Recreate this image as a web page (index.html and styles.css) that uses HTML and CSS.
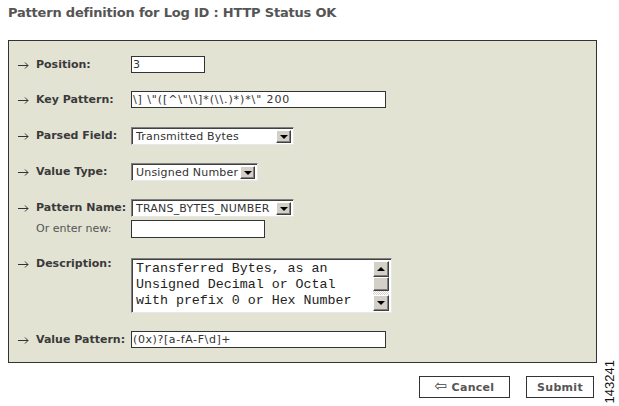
FILE: index.html
```html
<!DOCTYPE html>
<html>
<head>
<meta charset="utf-8">
<link rel="stylesheet" href="styles.css">
</head>
<body>
<h1 class="title">Pattern definition for Log ID : HTTP Status OK</h1>
<div class="panel">
  <div class="row r-pos">
    <div class="label"><span class="arrow"><svg width="11" height="7" viewBox="0 0 11 7"><path d="M0 3.5H10M7 0.5L10 3.5L7 6.5" fill="none" stroke="#333" stroke-width="1"/></svg></span>Position:</div>
    <div class="input w-pos">3</div>
  </div>
  <div class="row r-key">
    <div class="label"><span class="arrow"><svg width="11" height="7" viewBox="0 0 11 7"><path d="M0 3.5H10M7 0.5L10 3.5L7 6.5" fill="none" stroke="#333" stroke-width="1"/></svg></span>Key Pattern:</div>
    <div class="input w-key kp">\] \"([^\"\\]*(\\.)*)*\" 200</div>
  </div>
  <div class="row r-field">
    <div class="label"><span class="arrow"><svg width="11" height="7" viewBox="0 0 11 7"><path d="M0 3.5H10M7 0.5L10 3.5L7 6.5" fill="none" stroke="#333" stroke-width="1"/></svg></span>Parsed Field:</div>
    <div class="select w-field"><span class="sel-text">Transmitted Bytes</span><span class="sel-btn"><span class="tri"></span></span></div>
  </div>
  <div class="row r-type">
    <div class="label"><span class="arrow"><svg width="11" height="7" viewBox="0 0 11 7"><path d="M0 3.5H10M7 0.5L10 3.5L7 6.5" fill="none" stroke="#333" stroke-width="1"/></svg></span>Value Type:</div>
    <div class="select w-type"><span class="sel-text">Unsigned Number</span><span class="sel-btn"><span class="tri"></span></span></div>
  </div>
  <div class="group r-name">
    <div class="row">
      <div class="label"><span class="arrow"><svg width="11" height="7" viewBox="0 0 11 7"><path d="M0 3.5H10M7 0.5L10 3.5L7 6.5" fill="none" stroke="#333" stroke-width="1"/></svg></span>Pattern Name:</div>
      <div class="select w-field"><span class="sel-text">TRANS_BYTES_NUMBER</span><span class="sel-btn"><span class="tri"></span></span></div>
    </div>
    <div class="row sub">
      <div class="label plain"><span class="arrow"></span>Or enter new:</div>
      <div class="input w-new"></div>
    </div>
  </div>
  <div class="row top r-desc">
    <div class="label"><span class="arrow"><svg width="11" height="7" viewBox="0 0 11 7"><path d="M0 3.5H10M7 0.5L10 3.5L7 6.5" fill="none" stroke="#333" stroke-width="1"/></svg></span>Description:</div>
    <div class="textarea">
      <div class="ta-text">Transferred Bytes, as an<br>Unsigned Decimal or Octal<br>with prefix 0 or Hex Number</div>
      <div class="scroll">
        <span class="sb-btn"><span class="tri up"></span></span>
        <span class="sb-thumb"></span>
        <span class="sb-track"></span>
        <span class="sb-btn"><span class="tri"></span></span>
      </div>
    </div>
  </div>
  <div class="row r-val">
    <div class="label"><span class="arrow"><svg width="11" height="7" viewBox="0 0 11 7"><path d="M0 3.5H10M7 0.5L10 3.5L7 6.5" fill="none" stroke="#333" stroke-width="1"/></svg></span>Value Pattern:</div>
    <div class="input w-key">(0x)?[a-fA-F\d]+</div>
  </div>
</div>
<div class="actions">
  <button class="btn cancel"><span class="bk">⇦</span> Cancel</button>
  <button class="btn submit">Submit</button>
</div>
<div class="figno">143241</div>
</body>
</html>
```
FILE: styles.css
```css
html, body {
  margin: 0;
  padding: 0;
  background: #ffffff;
}
body {
  width: 619px;
  height: 406px;
  position: relative;
  overflow: hidden;
  font-family: "DejaVu Sans", Verdana, sans-serif;
  font-size: 11px;
  color: #333;
}
.title {
  margin: 0;
  padding: 5px 0 0 8px;
  font-size: 13px;
  line-height: 16px;
  font-weight: bold;
  color: #555;
  letter-spacing: -0.2px;
}
.panel {
  box-sizing: border-box;
  margin: 19px 0 0 8px;
  width: 589px;
  height: 323px;
  background: #e3e3d4;
  border: 1px solid #333;
  padding: 15px 0 0 9px;
  display: flex;
  flex-direction: column;
}
.row {
  display: flex;
  align-items: center;
}
.row.top {
  align-items: flex-start;
}
.label {
  width: 113px;
  display: flex;
  align-items: center;
  font-weight: bold;
  color: #3a3a3a;
  white-space: nowrap;
  line-height: 14px;
}
.label.plain {
  font-weight: normal;
  color: #555;
}
.arrow {
  width: 18px;
  height: 14px;
  display: flex;
  align-items: center;
  flex: none;
}
.arrow svg {
  display: block;
  margin-top: 1px;
}
.r-pos { margin-bottom: 18px; }
.r-key { margin-bottom: 19px; }
.r-field { margin-bottom: 18px; }
.r-type { margin-bottom: 18px; }
.r-name { margin-bottom: 20px; }
.r-desc { margin-bottom: 18px; }
.sub { margin-top: 3px; }
.r-desc .label { margin-top: -1px; }

.input {
  box-sizing: border-box;
  height: 17px;
  background: #fff;
  border: 1px solid #333;
  padding: 0 2px 0 1px;
  line-height: 15px;
  font-size: 11px;
  color: #333;
  white-space: nowrap;
  overflow: hidden;
  letter-spacing: 0.6px;
}
.input.kp { letter-spacing: 0.9px; }
.w-pos { width: 74px; }
.w-key { width: 255px; }
.w-new { width: 134px; height: 18px; }

.select {
  box-sizing: border-box;
  height: 18px;
  background: #fff;
  border: 1px solid;
  border-color: #808080 #e8e8e8 #e8e8e8 #808080;
  box-shadow: inset 1px 1px 0 #404040;
  display: flex;
  align-items: stretch;
  padding: 2px 2px 1px 4px;
  font-size: 11px;
  color: #333;
}
.w-field { width: 163px; }
.w-type { width: 127px; }
.sel-text {
  flex: 1;
  line-height: 13px;
  white-space: nowrap;
  overflow: hidden;
  letter-spacing: 0.2px;
}
.sel-btn {
  box-sizing: border-box;
  width: 15px;
  background: #d4d0c8;
  border: 1px solid;
  border-color: #fff #404040 #404040 #fff;
  box-shadow: inset -1px -1px 0 #808080;
  display: flex;
  align-items: center;
  justify-content: center;
}
.tri {
  width: 0;
  height: 0;
  border-left: 4px solid transparent;
  border-right: 4px solid transparent;
  border-top: 4px solid #000;
}
.tri.up {
  border-top: 0;
  border-bottom: 4px solid #000;
}

.textarea {
  box-sizing: border-box;
  width: 261px;
  height: 55px;
  background: #fff;
  border: 1px solid;
  border-color: #808080 #e8e8e8 #e8e8e8 #808080;
  box-shadow: inset 1px 1px 0 #404040;
  display: flex;
  padding: 2px 2px 1px 2px;
}
.ta-text {
  flex: 1;
  font-family: "Liberation Mono", "Courier New", monospace;
  font-size: 13.3px;
  line-height: 16px;
  color: #222;
  padding-left: 2px;
  white-space: nowrap;
  overflow: hidden;
}
.scroll {
  width: 16px;
  display: flex;
  flex-direction: column;
}
.sb-btn, .sb-thumb {
  box-sizing: border-box;
  background: #d4d0c8;
  border: 1px solid;
  border-color: #fff #404040 #404040 #fff;
  box-shadow: inset -1px -1px 0 #808080;
  display: flex;
  align-items: center;
  justify-content: center;
}
.sb-btn { height: 16px; }
.sb-thumb { height: 14px; }
.sb-track {
  flex: 1;
  background-color: #e8e8e8;
  background-image: repeating-conic-gradient(#fff 0 25%, #d4d0c8 0 50%);
  background-size: 2px 2px;
}

.actions {
  display: flex;
  justify-content: flex-end;
  gap: 16px;
  padding-right: 25px;
  margin-top: 13px;
}
.btn {
  box-sizing: border-box;
  height: 22px;
  background: #fff;
  border: 1px solid #333;
  font-family: "DejaVu Sans", Verdana, sans-serif;
  font-size: 11px;
  font-weight: bold;
  color: #555;
  padding: 0;
  letter-spacing: 0.3px;
}
.cancel { width: 91px; }
.submit { width: 68px; }
.bk {
  font-weight: normal;
  font-size: 15px;
  line-height: 11px;
  color: #444;
}
.figno {
  position: absolute;
  left: 604px;
  top: 360px;
  writing-mode: vertical-rl;
  transform: rotate(180deg);
  font-family: "Liberation Sans", Arial, sans-serif;
  font-size: 13px;
  line-height: 12px;
  color: #111;
}
```
